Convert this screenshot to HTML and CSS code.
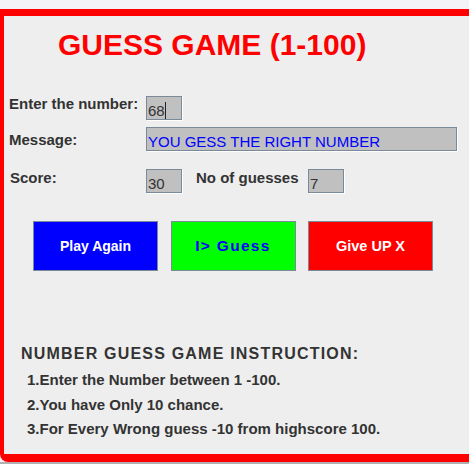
FILE: index.html
```html
<!DOCTYPE html>
<html>
<head>
<meta charset="utf-8">
<link rel="stylesheet" href="styles.css">
</head>
<body>
<div class="frame">
  <h1 class="title">GUESS GAME (1-100)</h1>
  <div class="row row1">
    <span class="label">Enter the number:</span>
    <span class="field small"><span class="caret">68</span></span>
  </div>
  <div class="row row2">
    <span class="label">Message:</span>
    <span class="field wide msg">YOU GESS THE RIGHT NUMBER</span>
  </div>
  <div class="row row3">
    <span class="label score">Score:</span>
    <span class="field small">30</span>
    <span class="label guesses">No of guesses</span>
    <span class="field small">7</span>
  </div>
  <div class="buttons">
    <div class="btn play">Play Again</div>
    <div class="btn guess">I&gt; Guess</div>
    <div class="btn giveup">Give UP X</div>
  </div>
  <div class="instr">
    <h2 class="instr-head">NUMBER GUESS GAME INSTRUCTION:</h2>
    <ol class="instr-list">
      <li>1.Enter the Number between 1 -100.</li>
      <li>2.You have Only 10 chance.</li>
      <li>3.For Every Wrong guess -10 from highscore 100.</li>
    </ol>
  </div>
</div>
<div class="below"></div>
</body>
</html>
```

FILE: styles.css
```css
html, body {
  margin: 0;
  padding: 0;
}
body {
  width: 469px;
  height: 464px;
  overflow: hidden;
  background: #f4f2f6;
  font-family: "Liberation Sans", Arial, sans-serif;
  color: #333333;
}
.frame {
  margin-top: 9px;
  height: 438px;
  background: #eeeeee;
  border-top: 7px solid #ff0000;
  border-left: 4px solid #ff0000;
  border-bottom: 8px solid #ff0000;
  border-bottom-left-radius: 8px;
  display: flex;
  flex-direction: column;
}
.title {
  margin: 14px 0 0 0;
  padding-left: 54px;
  font-size: 30px;
  line-height: 30px;
  font-weight: bold;
  color: #ff0000;
}
.row {
  display: flex;
  align-items: flex-start;
  padding-left: 5px;
}
.label {
  font-size: 15px;
  line-height: 17px;
  font-weight: bold;
  width: 137px;
  white-space: nowrap;
}
.row1 { margin-top: 35px; }
.row1 .field { margin-top: 1px; }
.row2 { margin-top: 7px; }
.row2 .label { margin-top: 4px; }
.row3 { margin-top: 18px; }
.row3 .label { margin-top: 0; }
.row3 .field { margin-top: 0; }
.label.score { width: 136px; margin-left: 1px; }
.label.guesses { width: 112px; margin-left: 14px; }
.field {
  box-sizing: border-box;
  height: 24px;
  border: 1px solid #7a8a99;
  box-shadow: 1px 1px 0 #ffffff;
  background: #c0c0c0;
  font-size: 15px;
  line-height: 17px;
  padding: 5px 0 0 1px;
  color: #333333;
  white-space: nowrap;
  overflow: hidden;
}
.field.small { width: 36px; }
.field.wide { width: 311px; }
.field.msg { color: #0000ff; }
.caret {
  border-right: 1px solid #222222;
}
.buttons {
  display: flex;
  gap: 12.5px;
  margin-top: 28px;
  padding-left: 29px;
}
.btn {
  box-sizing: border-box;
  width: 125px;
  height: 50px;
  border: 1px solid #7a8a99;
  display: flex;
  align-items: center;
  justify-content: center;
  font-size: 14px;
  font-weight: bold;
  color: #ffffff;
}
.btn.play { background: #0000ff; }
.btn.guess {
  background: #00ff00;
  color: #0000ff;
  font-size: 15.5px;
  letter-spacing: 1.3px;
}
.btn.giveup { background: #ff0000; font-size: 14.5px; }
.instr {
  margin-top: 73px;
}
.instr-head {
  margin: 0;
  padding-left: 17px;
  font-size: 16px;
  line-height: 20px;
  font-weight: bold;
  letter-spacing: 1.2px;
  color: #333333;
}
.instr-list {
  list-style: none;
  margin: 4px 0 0 0;
  padding-left: 23px;
}
.instr-list li {
  font-size: 15px;
  line-height: 24.5px;
  font-weight: bold;
  color: #333333;
}
.below {
  height: 2px;
  background: #b0b0b0;
}
```
